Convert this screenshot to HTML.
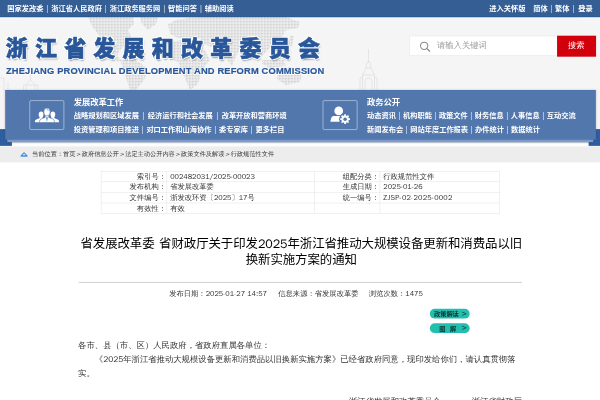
<!DOCTYPE html>
<html lang="zh-CN">
<head>
<meta charset="utf-8">
<title>浙江省发展和改革委员会</title>
<style>
html,body{margin:0;padding:0;width:600px;height:400px;overflow:hidden;background:#fff;}
body{font-family:"WenQuanYi Zen Hei","Noto Sans CJK SC",sans-serif;}
#clip{position:absolute;left:0;top:0;width:600px;height:400px;overflow:hidden;background:#fff;}
#page{position:absolute;left:0;top:0;width:1160px;height:776px;transform:scale(0.517241);transform-origin:0 0;color:#333;filter:blur(0.7px);}
#page *{box-sizing:border-box;}
/* top bar */
#topbar{position:absolute;left:0;top:0;width:1160px;height:33px;box-shadow:-40px 0 0 #355e95,40px 0 0 #355e95,0 -40px 0 #355e95,-40px -40px 0 #355e95,40px -40px 0 #355e95;background:#355e95;border-bottom:2px solid #2f5a93;color:#fff;font-family:"Noto Sans CJK SC","WenQuanYi Zen Hei",sans-serif;font-size:14px;line-height:32px;font-weight:bold;}
#topbar span{position:absolute;top:0px;white-space:nowrap;}
#topbar .sep{width:15px;text-align:center;font-weight:normal;}
/* header */
#header{position:absolute;left:-40px;top:32px;width:1240px;height:250px;background:#f5f5f5;}
#map{position:absolute;left:0;top:32px;width:1160px;height:145px;}
#logo{position:absolute;left:11px;top:60.5px;-webkit-text-stroke:1.2px #29579a;font-family:"Noto Sans CJK SC","WenQuanYi Zen Hei",sans-serif;font-weight:900;font-size:42.5px;line-height:60px;letter-spacing:14px;color:#29579a;white-space:nowrap;
 text-shadow:-2px -2px 0 #fff,2px -2px 0 #fff,-2px 2px 0 #fff,2px 2px 0 #fff,0 -2px 0 #fff,0 2px 0 #fff,-2px 0 0 #fff,2px 0 0 #fff,2px 3px 3px rgba(0,0,0,.35);}
#logoen{position:absolute;left:11.5px;top:127.5px;-webkit-text-stroke:0.4px #29579a;font-family:"Liberation Sans",sans-serif;font-weight:bold;font-size:18px;line-height:20px;color:#29579a;white-space:nowrap;letter-spacing:0.33px;
 text-shadow:-1px -1px 0 #fff,1px -1px 0 #fff,-1px 1px 0 #fff,1px 1px 0 #fff;}
#search{position:absolute;left:791px;top:69px;width:287px;height:39px;background:#fff;border:1px solid #e2e2e2;}
#search .ph{position:absolute;left:53px;top:0;line-height:37px;font-size:16px;color:#999;}
#search svg{position:absolute;left:18px;top:9px;}
#sbtn{position:absolute;left:1077px;top:69px;width:74px;height:39px;background:#d1000b;color:#fff;font-size:16px;line-height:39px;text-align:center;}
/* nav */
.rib{position:absolute;top:250px;height:32px;background:#2e5da0;}
#white{position:absolute;left:-40px;top:270px;width:1240px;height:12px;background:#fff;}
#crumb{position:absolute;left:-40px;top:283px;width:1240px;height:31px;background:#ededed;}
#strip{position:absolute;left:14px;top:268px;width:1133px;height:6.5px;background:#7d9dce;box-shadow:0 1px 3px rgba(0,0,0,.3);}
#nav{position:absolute;left:9.5px;top:174px;width:1142px;height:96px;background:#5277ad;border-top:1px solid #4c70a8;box-shadow:0 0 4px rgba(40,60,100,.3);color:#fff;font-family:"Noto Sans CJK SC","WenQuanYi Zen Hei",sans-serif;}
.ibox{position:absolute;top:19px;width:67px;height:57px;border:1px solid #e4ebf5;border-radius:3px;}
.ibox svg{position:absolute;left:-1px;top:-1px;}
.ntitle{position:absolute;top:10px;font-size:16px;line-height:22px;font-weight:bold;white-space:nowrap;}
.nrow{position:absolute;font-size:14px;line-height:20px;font-weight:bold;white-space:nowrap;}
.nrow i{font-style:normal;font-weight:normal;display:inline-block;width:17px;text-align:center;}
.nrow.c i{width:14.5px;}
.nrow.b i{width:13.5px;}
/* breadcrumb */
#crumbtxt{position:absolute;left:62px;top:287px;font-size:12px;line-height:20px;color:#333;white-space:nowrap;}
#home{position:absolute;left:39px;top:292.5px;}
#crumbtxt i{font-style:normal;display:inline-block;width:12px;text-align:center;font-family:"DejaVu Sans",sans-serif;font-size:11px;}
/* content */
#tbl{position:absolute;left:195px;top:331px;width:770px;border-collapse:collapse;font-size:14.1px;color:#333;table-layout:fixed;}
#tbl td{border:1px solid #e3e3e3;height:20.3px;line-height:19px;padding:0 0 0 6px;white-space:nowrap;overflow:hidden;}
#tbl td.l{text-align:right;padding:0 1px 0 0;}
#title{position:absolute;left:143.5px;top:453.5px;width:878px;letter-spacing:-0.12px;word-spacing:3.5px;text-align:center;font-family:"Noto Sans CJK SC","WenQuanYi Zen Hei",sans-serif;font-size:24px;line-height:30px;color:#000;}
#hr{position:absolute;left:152px;top:545px;width:857px;height:2px;background:#d2d2d2;}
#info{position:absolute;left:0;top:558px;width:1160px;font-size:14.12px;line-height:20px;color:#333;white-space:nowrap;}
#info span{position:absolute;top:0;}
.pill{position:absolute;left:831px;width:77px;height:19px;border-radius:9.5px;background:#22bfb0;color:#12332f;font-family:"Noto Sans CJK SC","WenQuanYi Zen Hei",sans-serif;font-size:12px;line-height:18px;font-weight:bold;white-space:nowrap;}
.pill .gt{font-family:"DejaVu Sans",sans-serif;font-size:13px;font-weight:normal;left:61px;}
.pill span{position:absolute;top:0;}
#body{position:absolute;left:151px;top:654px;width:858px;font-size:16.15px;line-height:27px;color:#333;}
#body p{margin:0;white-space:nowrap;}
</style>
</head>
<body>
<div id="clip">
<div id="page">
 <div id="header"></div>
 <svg id="map" viewBox="0 16.5 600 75" preserveAspectRatio="none"><defs><pattern id="dots" x="0" y="0" width="1.5" height="1.5" patternUnits="userSpaceOnUse"><rect x="0" y="0" width="1" height="1" fill="#cdcdcd"/></pattern></defs><g fill="url(#dots)"><polygon points="88,17 133,17 134,24 128,30 131,36 126,44 120,50 117,56 121,60 118,62 110,54 104,44 98,34 92,26"/><polygon points="140,17 158,17 156,24 148,30 142,24"/><polygon points="120,60 132,58 142,64 148,70 144,80 136,90 131,92 128,84 124,72"/><polygon points="168,24 176,20 190,18 200,17 200,38 188,40 178,38 170,34"/><polygon points="166,44 180,40 198,42 206,52 210,60 202,70 198,84 190,90 184,76 178,62 168,58"/><polygon points="200,17 230,17 286,17 300,22 298,28 286,30 280,40 270,48 262,56 252,56 246,50 238,52 232,66 224,56 214,48 204,44 200,38"/><polygon points="262,60 284,60 286,66 270,68 262,64"/><polygon points="278,70 290,67 302,72 300,82 286,85 277,79"/><polygon points="290,36 294,36 292,46 287,48"/></g><g fill="none" stroke="#d4d4d4" stroke-width="0.5"><path d="M368.5 49 L368.5 62 M367 62 L370 62 L371 68 L366 68 Z M366 68 L362.5 75 L362.5 90 M371 68 L374.5 75 L374.5 90 M362.5 75 L374.5 75 M365 90 L365 80 Q368.5 76 372 80 L372 90 M360 90 L360 78 L362.5 77 M377 90 L377 78 L374.5 77"/><path d="M30.5 74 L30.5 80 M26 84 L30.5 80 L35 84 M23.5 90 L23.5 85 L38 85 L38 90 M26 85 L26 90 M35 85 L35 90 M0 78 L4 78 L4 90 M8 82 L8 90"/></g></svg>
 <div id="topbar">
  <span style="left:14px">国家发改委</span><span class="sep" style="left:84px">|</span>
  <span style="left:99px">浙江省人民政府</span><span class="sep" style="left:197px">|</span>
  <span style="left:212px">浙江政务服务网</span><span class="sep" style="left:310px">|</span>
  <span style="left:325px">智能问答</span><span class="sep" style="left:381px">|</span>
  <span style="left:396px">辅助阅读</span>
  <span style="left:946px">进入关怀版</span>
  <span style="left:1031px">简体</span><span class="sep" style="left:1058px">|</span>
  <span style="left:1073px">繁体</span><span class="sep" style="left:1101px">|</span>
  <span style="left:1118px">登录</span>
 </div>
 <div id="logo">浙江省发展和改革委员会</div>
 <div id="logoen">ZHEJIANG PROVINCIAL DEVELOPMENT AND REFORM COMMISSION</div>
 <div id="search">
  <svg width="24" height="24" viewBox="0 0 24 24"><circle cx="10" cy="9.5" r="7" fill="none" stroke="#8a8a8a" stroke-width="2"/><path d="M15 14.5 L20.5 20" stroke="#8a8a8a" stroke-width="2.4" stroke-linecap="round"/></svg>
  <span class="ph">请输入关键词</span>
 </div>
 <div id="sbtn">搜索</div>
 <div class="rib" style="left:-40px;width:63px"></div><div class="rib" style="left:1138px;width:62px"></div>
 <div id="white"></div>
 <div id="crumb"></div>
 <div class="rib" style="left:-40px;width:63px"></div><div class="rib" style="left:1138px;width:62px"></div>
 <div id="strip"></div>
 <div id="nav">
  <div class="ibox" style="left:47px"><svg width="67" height="57" viewBox="0 0 67 57">
<g fill="#fff">
<ellipse cx="22.4" cy="27.2" rx="4.6" ry="5.8"/>
<ellipse cx="45.2" cy="27.2" rx="4.6" ry="5.8"/>
<path d="M10.5 42.5 L10.5 40 Q11 37.5 14 36.6 L19.5 34.6 L19.5 32 L25.3 32 L25.3 42.5 Z"/>
<path d="M57.1 42.5 L57.1 40 Q56.6 37.5 53.6 36.6 L48.1 34.6 L48.1 32 L42.3 32 L42.3 42.5 Z"/>
</g>
<g fill="#fff" stroke="#5277ad" stroke-width="1.2">
<path d="M19.5 43 L19.5 40 Q20 36.5 24 35.3 L30.3 33 L30.3 28.5 L37.3 28.5 L37.3 33 L43.6 35.3 Q47.6 36.5 48.1 40 L48.1 43 Z"/>
<ellipse cx="33.8" cy="22.6" rx="6.2" ry="7.6"/>
</g>
<path d="M33.8 31.5 L32.3 33.5 L33.8 42 L35.3 33.5 Z" fill="#5277ad"/>
<path d="M33 18 q3 -1 3.6 2.4" stroke="#5277ad" stroke-width="1.1" fill="none"/>
</svg></div>
  <div class="ntitle" style="left:133px">发展改革工作</div>
  <div class="nrow" style="left:133px;top:37.5px">战略规划和区域发展<i>|</i>经济运行和社会发展<i>|</i>改革开放和营商环境</div>
  <div class="nrow c" style="left:133px;top:64px">投资管理和项目推进<i>|</i>对口工作和山海协作<i>|</i>委专家库<i>|</i>更多栏目</div>
  <div class="ibox" style="left:614px"><svg width="67" height="57" viewBox="0 0 67 57">
<circle cx="30.9" cy="20.4" r="8.4" fill="#fff"/>
<path d="M14.6 41.2 L16.6 33.5 Q17.6 30.2 21 30.2 L34.5 30.2 L34.5 41.2 Z" fill="#fff"/>
<circle cx="43.2" cy="36.4" r="11.6" fill="#5277ad"/>
<path d="M52.7 34.7 L52.7 38.1 L50.2 38.1 L49.3 40.2 L51.1 41.9 L48.7 44.3 L47.0 42.5 L44.9 43.4 L44.9 45.9 L41.5 45.9 L41.5 43.4 L39.4 42.5 L37.7 44.3 L35.3 41.9 L37.1 40.2 L36.2 38.1 L33.7 38.1 L33.7 34.7 L36.2 34.7 L37.1 32.6 L35.3 30.9 L37.7 28.5 L39.4 30.3 L41.5 29.4 L41.5 26.9 L44.9 26.9 L44.9 29.4 L47.0 30.3 L48.7 28.5 L51.1 30.9 L49.3 32.6 L50.2 34.7 Z" fill="#fff"/>
<circle cx="43.2" cy="36.4" r="3.4" fill="#5277ad"/>
</svg></div>
  <div class="ntitle" style="left:700px">政务公开</div>
  <div class="nrow b" style="left:700px;top:37.5px">动态资讯<i>|</i>机构职能<i>|</i>政策文件<i>|</i>财务信息<i>|</i>人事信息<i>|</i>互动交流</div>
  <div class="nrow b" style="left:700px;top:64px">新闻发布会<i>|</i>网站年度工作报表<i>|</i>办件统计<i>|</i>数据统计</div>
 </div>
 <svg id="home" width="15" height="11.5" viewBox="0 0 18 14"><path d="M9 1 L17 9.5 L17 12.5 L1 12.5 L1 9.5 Z" fill="#4a8fdc"/><path d="M9 4.5 L12.5 8.5 L5.5 8.5 Z" fill="#ededed"/></svg>
 <div id="crumbtxt">当前位置：首页<i>&gt;</i>政府信息公开<i>&gt;</i>法定主动公开内容<i>&gt;</i>政策文件及解读<i>&gt;</i>行政规范性文件</div>
 <table id="tbl">
  <colgroup><col style="width:127px"><col style="width:285px"><col style="width:127px"><col style="width:231px"></colgroup>
  <tr><td class="l">索引号：</td><td>002482031/2025-00023</td><td class="l">组配分类：</td><td>行政规范性文件</td></tr>
  <tr><td class="l">发布机构：</td><td>省发展改革委</td><td class="l">生成日期：</td><td>2025-01-26</td></tr>
  <tr><td class="l">文件编号：</td><td>浙发改环资〔2025〕17号</td><td class="l">统一编号：</td><td style="letter-spacing:0.4px">ZJSP-02-2025-0002</td></tr>
  <tr><td class="l">有效性：</td><td>有效</td><td class="l"></td><td></td></tr>
 </table>
 <div id="title">省发展改革委 省财政厅关于印发<span style="font-family:'WenQuanYi Zen Hei','Noto Sans CJK SC',sans-serif">2025</span>年浙江省推动大规模设备更新和消费品以旧<br>换新实施方案的通知</div>
 <div id="hr"></div>
 <div id="info"><span style="left:327px">发布日期：2025-01-27 14:57</span><span style="left:538px">信息来源：省发展改革委</span><span style="left:713px">浏览次数：1475</span></div>
 <div class="pill" style="top:597px"><span style="left:8px">政策解读</span><span class="gt">&gt;</span></div>
 <div class="pill" style="top:625px"><span style="left:18px">图</span><span style="left:39px">解</span><span class="gt">&gt;</span></div>
 <div id="body">
  <p>各市、县（市、区）人民政府，省政府直属各单位：</p>
  <p style="text-indent:2em">《2025年浙江省推动大规模设备更新和消费品以旧换新实施方案》已经省政府同意，现印发给你们，请认真贯彻落</p>
  <p>实。</p>
  <p>&nbsp;</p>
  <p style="position:absolute;top:107.5px;right:0">浙江省发展和改革委员会<span style="display:inline-block;width:60px"></span>浙江省财政厅</p>
 </div>
</div>
</div>
</body>
</html>
